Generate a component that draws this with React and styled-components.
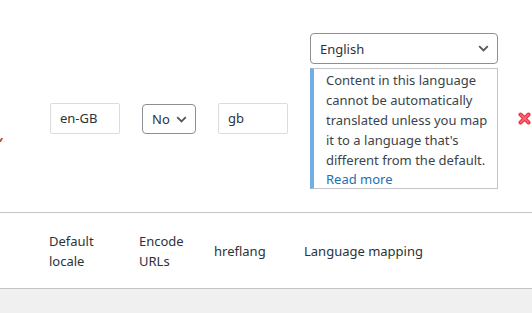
import React from "react";
import styled, { createGlobalStyle } from "styled-components";

const Global = createGlobalStyle`
  html, body { margin: 0; padding: 0; background: #f0f0f1; }
  body {
    font-family: "Noto Sans", "Open Sans", sans-serif;
    font-size: 13px;
    color: #3c434a;
    overflow: hidden;
  }
`;

const Table = styled.div`
  width: 532px;
  background: #fff;
  overflow: hidden;
`;

const Row = styled.div`
  display: grid;
  grid-template-columns: 40px 91px 77px 88px 212px 1fr;
  align-items: ${(p) => p.$align || "center"};
  height: ${(p) => p.$h}px;
  border-bottom: ${(p) => (p.$border ? "1px solid #c3c4c7" : "none")};
`;

const Cell = styled.div`
  padding-left: ${(p) => p.$pl || 0}px;
  margin-top: ${(p) => p.$mt || 0}px;
`;

const HeadCell = styled.div`
  padding-left: ${(p) => p.$pl || 0}px;
  font-size: 13px;
  line-height: 20px;
  color: #2c3338;
  margin-top: 1px;
`;

const TextInput = styled.div`
  box-sizing: border-box;
  width: 70px;
  height: 31px;
  border: 1px solid #dcdcde;
  border-radius: 2px;
  padding: 0 9px;
  font-size: 13px;
  line-height: 29px;
  color: #2c3338;
`;

const Select = styled.div`
  box-sizing: border-box;
  width: ${(p) => p.$w}px;
  height: ${(p) => p.$ht}px;
  border: 1px solid #8c8f94;
  border-radius: 4px;
  padding: 0 8px 0 9px;
  display: flex;
  align-items: center;
  justify-content: space-between;
  font-size: 13px;
  color: #2c3338;
`;

const Chevron = () => (
  <svg width="11" height="7" viewBox="0 0 11 7">
    <path d="M1.2 1.2 L5.5 5.4 L9.8 1.2" fill="none" stroke="#50575e" strokeWidth="1.8" />
  </svg>
);

const MapCell = styled.div`
  display: flex;
  flex-direction: column;
  gap: 4px;
`;

const Notice = styled.div`
  box-sizing: border-box;
  width: 188px;
  height: 121px;
  border: 1px solid #c3c4c7;
  border-left: 4px solid #72aee6;
  padding: 0 3px 0 12px;
  font-size: 13px;
  line-height: 20px;
  color: #3c434a;
`;

const NoticeText = styled.p`
  margin: 1px 0 0;
`;

const MoreLink = styled.a`
  display: block;
  line-height: 18px;
  color: #2271b1;
  text-decoration: none;
`;

const LeftMark = styled.span`
  position: absolute;
  left: 0;
  top: 138px;
  width: 2px;
  height: 4px;
  background: #b44a3a;
  transform: skewX(-30deg);
`;

const DeleteIcon = () => (
  <svg width="13" height="13" viewBox="0 0 13 13" style={{ display: "block" }}>
    <path d="M2.5 2.5 L10.5 10.5 M10.5 2.5 L2.5 10.5" stroke="#e6394a" strokeWidth="4" strokeLinecap="round" />
    <path d="M2.8 2.8 L10.2 10.2 M10.2 2.8 L2.8 10.2" stroke="#ff6b75" strokeWidth="1.6" strokeLinecap="round" />
  </svg>
);

const Gray = styled.div`
  height: 24px;
  background: #f0f0f1;
`;

const DataRow = styled(Row)`
  position: relative;
`;

export default function App() {
  return (
    <>
      <Global />
      <Table>
        <DataRow $h={212} $border $align="start">
          <LeftMark />
          <Cell />
          <Cell $pl={10} $mt={103}>
            <TextInput>en-GB</TextInput>
          </Cell>
          <Cell $pl={11} $mt={104}>
            <Select $w={54} $ht={30}>
              No <Chevron />
            </Select>
          </Cell>
          <Cell $pl={10} $mt={103}>
            <TextInput>gb</TextInput>
          </Cell>
          <Cell $pl={14} $mt={33}>
            <MapCell>
              <Select $w={188} $ht={31}>
                English <Chevron />
              </Select>
              <Notice>
                <NoticeText>
                  Content in this language cannot be automatically translated unless you map it to a language that's different from the default.
                </NoticeText>
                <MoreLink href="#">Read more</MoreLink>
              </Notice>
            </MapCell>
          </Cell>
          <Cell $pl={10} $mt={112}>
            <DeleteIcon />
          </Cell>
        </DataRow>
        <Row $h={75} $border>
          <HeadCell />
          <HeadCell $pl={9}>Default<br />locale</HeadCell>
          <HeadCell $pl={8}>Encode<br />URLs</HeadCell>
          <HeadCell $pl={6}>hreflang</HeadCell>
          <HeadCell $pl={8}>Language mapping</HeadCell>
          <HeadCell />
        </Row>
      </Table>
      <Gray />
    </>
  );
}
